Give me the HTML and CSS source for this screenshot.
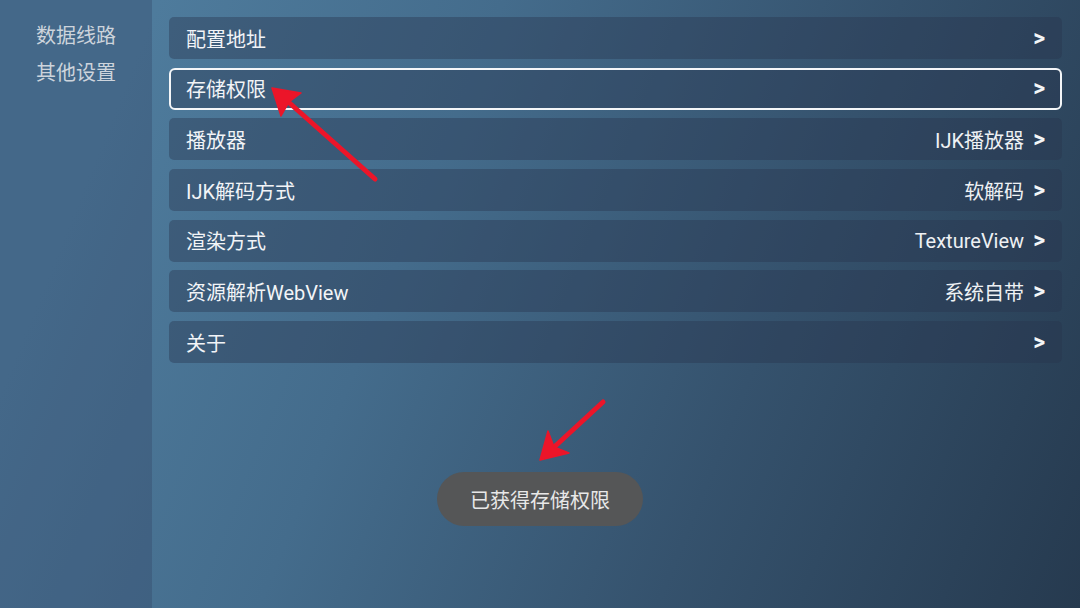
FILE: index.html
```html
<!DOCTYPE html>
<html lang="zh-CN">
<head>
    <meta charset="UTF-8">
    <meta name="viewport" content="width=device-width, initial-scale=1.0">
    <title>设置</title>
    <link rel="stylesheet" href="styles.css">
</head>
<body>
    <div class="screen">
        <aside class="sidebar">
            <div class="side-item">数据线路</div>
            <div class="side-item">其他设置</div>
        </aside>
        <main class="settings">
            <div class="row">
                <span class="label">配置地址</span>
                <span class="value"><i class="arrow">&gt;</i></span>
            </div>
            <div class="row focused">
                <span class="label">存储权限</span>
                <span class="value"><i class="arrow">&gt;</i></span>
            </div>
            <div class="row">
                <span class="label">播放器</span>
                <span class="value">IJK播放器<i class="arrow">&gt;</i></span>
            </div>
            <div class="row">
                <span class="label">IJK解码方式</span>
                <span class="value">软解码<i class="arrow">&gt;</i></span>
            </div>
            <div class="row">
                <span class="label">渲染方式</span>
                <span class="value">TextureView<i class="arrow">&gt;</i></span>
            </div>
            <div class="row">
                <span class="label">资源解析WebView</span>
                <span class="value">系统自带<i class="arrow">&gt;</i></span>
            </div>
            <div class="row">
                <span class="label">关于</span>
                <span class="value"><i class="arrow">&gt;</i></span>
            </div>
        </main>

        <div class="toast">已获得存储权限</div>

        <!-- annotation arrows -->
        <svg class="marks" width="1080" height="608" viewBox="0 0 1080 608">
            <g fill="#ec1529" stroke="#ec1529" stroke-linecap="round" stroke-linejoin="round">
                <line x1="375" y1="179" x2="285" y2="99" stroke-width="5"/>
                <polygon points="272,88 301,93 289,102 281,116" stroke-width="1.5"/>
                <line x1="603" y1="402" x2="551" y2="450" stroke-width="5"/>
                <polygon points="540,460 548,431 554,447 569,453" stroke-width="1.5"/>
            </g>
        </svg>
    </div>
</body>
</html>
```

FILE: styles.css
```css
html, body {
    margin: 0;
    padding: 0;
}
body {
    font-family: Roboto, 'Noto Sans CJK SC', sans-serif;
    color: #f2f4f7;
}
.screen {
    position: relative;
    width: 1080px;
    height: 608px;
    display: flex;
    overflow: hidden;
    background: linear-gradient(112deg, #4e7b9c 12%, #446c8c 38%, #35526d 68%, #263a4f 100%);
}
.sidebar {
    width: 152px;
    flex: none;
    padding-top: 18px;
    box-sizing: border-box;
    background: rgba(48, 58, 92, 0.3);
}
.side-item {
    padding-left: 36px;
    font-size: 20px;
    line-height: 37px;
    color: #cdd4dc;
}
.settings {
    flex: 1;
    display: flex;
    flex-direction: column;
    gap: 8.7px;
    padding: 17px 18px 0 17px;
}
.row {
    height: 42px;
    box-sizing: border-box;
    display: flex;
    align-items: center;
    justify-content: space-between;
    padding: 0 17px;
    border-radius: 5px;
    background: rgba(40, 52, 78, 0.4);
    font-size: 20px;
}
.row.focused {
    border: 2px solid #f4f6f8;
    padding: 0 15px;
    border-radius: 6px;
}
.value {
    display: flex;
    align-items: center;
    color: #eef1f4;
}
.arrow {
    font-style: normal;
    font-weight: 700;
    font-size: 23px;
    line-height: 1;
    margin-left: 9px;
    color: #f4f6f8;
}
.toast {
    position: absolute;
    left: 437px;
    top: 472px;
    height: 54px;
    padding: 0 33px;
    display: flex;
    align-items: center;
    border-radius: 27px;
    background: #555657;
    color: #e8e8e8;
    font-size: 20px;
}
.marks {
    position: absolute;
    left: 0;
    top: 0;
    pointer-events: none;
}
```
